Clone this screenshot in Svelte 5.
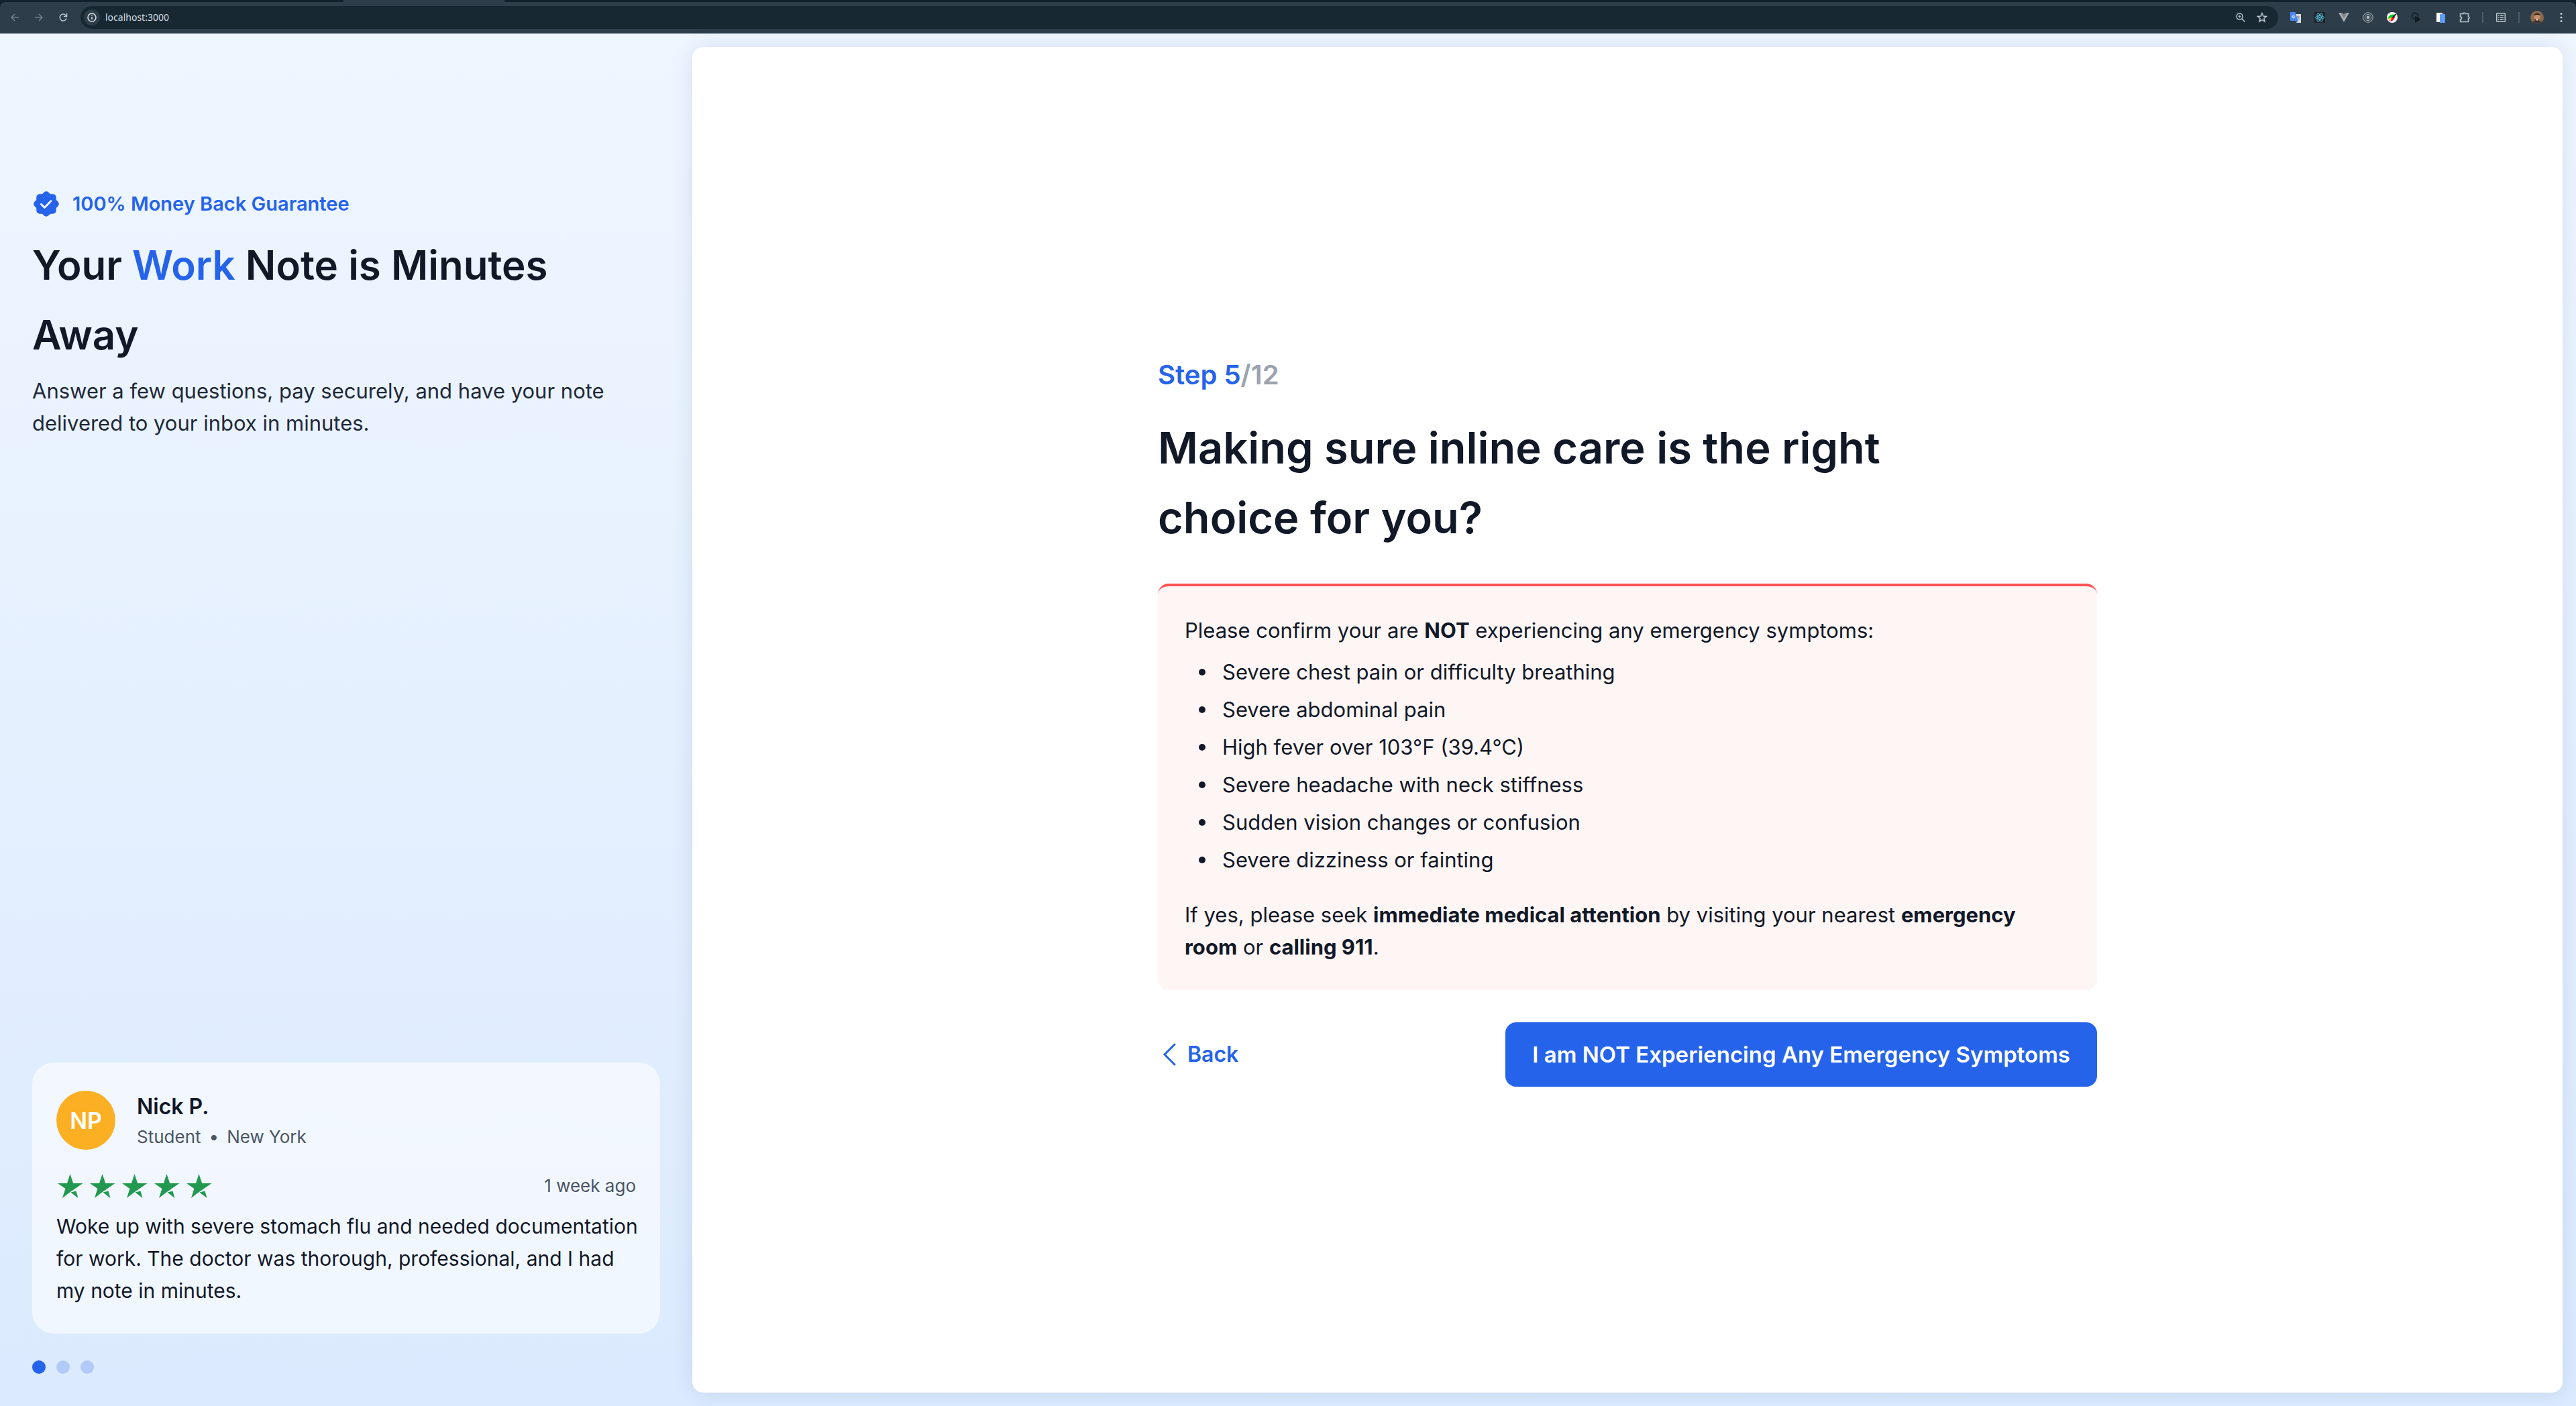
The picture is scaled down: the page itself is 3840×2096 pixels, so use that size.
<script>
  const stars = [1, 2, 3, 4, 5];
  const symptoms = [
    'Severe chest pain or difficulty breathing',
    'Severe abdominal pain',
    'High fever over 103°F (39.4°C)',
    'Severe headache with neck stiffness',
    'Sudden vision changes or confusion',
    'Severe dizziness or fainting'
  ];
  let slide = $state(0);
</script>

<div class="window">
  <header class="browser">
    <div class="tabstrip"><span class="tab"></span></div>
    <div class="toolbar">
      <nav class="nav">
        <button class="icon dim" aria-label="Back"><svg viewBox="0 0 16 16"><path d="M14 8H3M8 3L3 8l5 5" /></svg></button>
        <button class="icon dim" aria-label="Forward"><svg viewBox="0 0 16 16"><path d="M2 8h11M8 3l5 5-5 5" /></svg></button>
        <button class="icon" aria-label="Reload"><svg viewBox="0 0 16 16"><path d="M13 9.5A5 5 0 1 1 11.8 4.5L13 6M13.5 2v4.5H9" /></svg></button>
      </nav>
      <div class="address">
        <span class="info"><svg viewBox="0 0 16 16"><circle cx="8" cy="8" r="6" /><path d="M8 7v4M8 4.5v1.3" /></svg></span>
        <input class="url" aria-label="Address" value="localhost:3000" />
        <button class="icon" aria-label="Zoom"><svg viewBox="0 0 16 16"><circle cx="6.5" cy="6.5" r="4.5" /><path d="M10 10l4.500 4.500M6.500 4.800v3.400M4.800 6.500h3.400" /></svg></button>
        <button class="icon" aria-label="Bookmark"><svg viewBox="0 0 16 16"><path d="M8 1.800l1.800 4.300 4.700.4-3.600 3 1.100 4.600L8 11.700l-4 2.400 1.100-4.600-3.600-3 4.700-.4z" /></svg></button>
      </div>
      <div class="extensions">
        <button class="icon art" aria-label="Translate"><svg viewBox="0 0 16 16"><path d="M6 3h10v13H9z" fill="#d6dadd" /><path d="M9 7h5M11.500 6v1M13 7c-.5 2-2 3.500-3 4.500M10.500 8.500c1 1.500 2 2.500 3 3" fill="none" stroke="#6f7f8c" /><path d="M0 0h7.500l4 13H1a1 1 0 0 1-1-1z" fill="#4a86f0" /><path d="M7.500 13h4L9 16z" fill="#2a5fd0" /><path d="M6.300 5.200A2 2 0 1 0 7 7H5" stroke="#fff" /></svg></button>
        <button class="icon art" aria-label="React"><svg viewBox="0 0 16 16"><rect width="16" height="16" fill="#20232a" /><g stroke="#53c1de"><ellipse cx="8" cy="8" rx="6.5" ry="2.5" /><ellipse cx="8" cy="8" rx="6.5" ry="2.5" transform="rotate(60 8 8)" /><ellipse cx="8" cy="8" rx="6.5" ry="2.5" transform="rotate(120 8 8)" /></g><circle cx="8" cy="8" r="1.3" fill="#53c1de" /></svg></button>
        <button class="icon art" aria-label="Vue"><svg viewBox="0 0 16 16"><path d="M0 1h6l2 3 2-3h6L8 15z" fill="#a9adb0" /><path d="M3.200 1H6l2 3 2-3h2.800L8 9.500z" fill="#808488" /></svg></button>
        <button class="icon art" aria-label="Recorder"><svg viewBox="0 0 16 16"><g stroke="#b4b8bb"><circle cx="8" cy="8" r="7.3" /><circle cx="8" cy="8" r="4.6" /></g><circle cx="8" cy="8" r="2.4" fill="#b4b8bb" /></svg></button>
        <button class="icon art" aria-label="Colour picker"><svg viewBox="0 0 16 16"><circle cx="8" cy="8" r="8" fill="#fff" /><path d="M2 10C2 6 5 3.500 10 3.500l1 1.500-4.500 4z" fill="#00d21c" /><path d="M2 10l5-2-2 5z" fill="#ffe100" /><path d="M7 8l5-2c0 4-2.500 7-6.500 8z" fill="#f01432" /><path d="M3 11.500l2.500 1v2z" fill="#e01ee0" /><path d="M8 7.500l4-4.500h2l-1 2-4 4z" fill="#111" /></svg></button>
        <button class="icon art" aria-label="Player"><svg viewBox="0 0 16 16"><circle cx="6" cy="6" r="4.5" stroke="#1e2b34" stroke-width="3" /><path d="M6 6l9 5-9 5z" fill="#101a20" /></svg></button>
        <button class="icon art" aria-label="Documents"><svg viewBox="0 0 16 16"><rect x="2" y="1" width="9" height="14" rx="1" fill="#fff" /><rect x="7" y="3" width="8" height="13" rx="1" fill="#5d9df8" /></svg></button>
        <button class="icon" aria-label="Extensions"><svg viewBox="0 0 16 16"><path d="M1.500 2.500H6a1.500 1.500 0 0 1 3 0h4.500V7a1.500 1.500 0 0 1 0 3v4.500h-12V11a2 2 0 0 0 0-4z" /></svg></button>
        <span class="rule"></span>
        <button class="icon" aria-label="Side panel"><svg viewBox="0 0 16 16"><rect x="1.700" y="1.700" width="12.6" height="12.6" rx="1" /><path d="M4 5h1.500M7 5h5M4 8h1.500M7 8h5M4 11h1.500M7 11h5" /></svg></button>
        <span class="rule"></span>
        <button class="icon profile" aria-label="Profile"><svg viewBox="0 0 20 20"><circle cx="10" cy="10" r="10" fill="#8b6a4e" /><path d="M3 17c2-3 12-3 14 0a10 10 0 0 1-14 0z" fill="#3d3a35" /><ellipse cx="10" cy="10" rx="4.5" ry="6" fill="#c98f6b" /><path d="M5.500 7.500c0-5 9-5 9 0-2-2-7-2-9 0zM6 12.500c1 4.500 7 4.500 8 0-2 1-6 1-8 0z" fill="#2e201a" /><path d="M8.500 13.700h3" stroke="#fff" /></svg></button>
        <button class="icon" aria-label="Menu"><svg viewBox="0 0 16 16"><g fill="#bcc8cf" stroke="none"><circle cx="8" cy="2.5" r="1.6" /><circle cx="8" cy="8" r="1.6" /><circle cx="8" cy="13.5" r="1.6" /></g></svg></button>
      </div>
    </div>
  </header>

  <div class="page">
    <aside class="side">
      <section class="intro">
        <p class="guarantee">
          <svg viewBox="0 0 24 24" aria-hidden="true"><g fill="#2563eb"><rect x="3.600" y="3.600" width="16.800" height="16.800" rx="2.800" /><rect x="3.600" y="3.600" width="16.800" height="16.800" rx="2.800" transform="rotate(45 12 12)" /></g><path d="M7.700 12.300l2.800 2.800L16 9.500" fill="none" stroke="#fff" stroke-width="1.6" stroke-linecap="round" stroke-linejoin="round" /></svg>
          100% Money Back Guarantee
        </p>
        <h1>Your <em>Work</em> Note is Minutes Away</h1>
        <p class="lead">Answer a few questions, pay securely, and have your note delivered to your inbox in minutes.</p>
      </section>

      <section class="reviews">
        <article class="card">
          <div class="person">
            <span class="avatar">NP</span>
            <div class="who">
              <h3>Nick P.</h3>
              <p class="meta"><span>Student</span><span>•</span><span>New York</span></p>
            </div>
          </div>
          <div class="rating">
            <span class="stars" role="img" aria-label="5 out of 5 stars">
              {#each stars as s (s)}
                <svg viewBox="0 0 40 40"><path d="M20.500 2l4.700 14H39.500L20 29.500 9 38l4.500-14L2 16h14z M21.500 29.500l8-2L32.500 38z" /></svg>
              {/each}
            </span>
            <span class="when">1 week ago</span>
          </div>
          <p class="quote">Woke up with severe stomach flu and needed documentation for work. The doctor was thorough, professional, and I had my note in minutes.</p>
        </article>
        <div class="dots">
          {#each [0, 1, 2] as i (i)}
            <button class="dot" class:active={slide === i} aria-label={`Review ${i + 1}`} onclick={() => (slide = i)}></button>
          {/each}
        </div>
      </section>
    </aside>

    <main class="panel">
      <div class="content">
        <p class="step">Step 5<span>/12</span></p>
        <h2>Making sure inline care is the right choice for you?</h2>
        <section class="alert">
          <p>Please confirm your are <strong>NOT</strong> experiencing any emergency symptoms:</p>
          <ul>
            {#each symptoms as symptom (symptom)}
              <li>{symptom}</li>
            {/each}
          </ul>
          <p>If yes, please seek <strong>immediate medical attention</strong> by visiting your nearest <strong>emergency room</strong> or <strong>calling 911</strong>.</p>
        </section>
        <div class="actions">
          <button class="back"><svg viewBox="0 0 32 40" aria-hidden="true"><path d="M25 5L10 20l15 15" /></svg>Back</button>
          <button class="confirm">I am NOT Experiencing Any Emergency Symptoms</button>
        </div>
      </div>
    </main>
  </div>
</div>

<style>
  :global(body) { margin: 0; }
  * { box-sizing: border-box; }
  h1, h2, h3, p, ul { margin: 0; padding: 0; }
  button { border: 0; padding: 0; background: none; font: inherit; color: inherit; cursor: pointer; }

  .window {
    min-height: 100vh;
    display: flex;
    flex-direction: column;
    font-family: Inter, "Liberation Sans", sans-serif;
    color: #111827;
  }

  .browser { background: #10222b; }
  .tabstrip { height: 3px; padding-left: 512px; }
  .tab { display: block; width: 240px; height: 3px; background: #2d3e4a; }
  .toolbar {
    display: flex;
    align-items: center;
    height: 47px;
    padding: 0 12px;
    background: #2d3e4a;
    border-bottom: 1px solid #44535e;
    border-radius: 8px 8px 0 0;
  }
  .nav { display: flex; gap: 16px; padding-right: 16px; }
  .icon { display: flex; align-items: center; justify-content: center; width: 20px; height: 20px; }
  .icon svg { width: 16px; height: 16px; fill: none; stroke: #bcc8cf; stroke-width: 1.5; }
  .dim svg { stroke: #73818a; }
  .icon.art svg { stroke: none; stroke-width: 1; }
  .icon.profile svg { width: 20px; height: 20px; stroke: none; }
  .address {
    flex: 1;
    display: flex;
    align-items: center;
    gap: 12px;
    height: 34px;
    padding: 0 14px 0 5px;
    border-radius: 17px;
    background: #172833;
  }
  .info { display: flex; align-items: center; justify-content: center; width: 24px; height: 24px; border-radius: 50%; background: #2d3e4a; }
  .info svg { width: 16px; height: 16px; fill: none; stroke: #dce3e7; stroke-width: 1.5; }
  .url { flex: 1; min-width: 0; margin-left: -4px; padding: 0; border: 0; outline: 0; background: none; color: #d5dde2; font: 14px/20px "Noto Sans", sans-serif; }
  .extensions { display: flex; align-items: center; gap: 16px; padding-left: 16px; }
  .rule { width: 2px; height: 16px; background: #4b5d69; }

  .page {
    flex: 1;
    display: flex;
    padding: 20px 20px 20px 0;
    background: linear-gradient(#eff6ff, #dbeafe);
  }
  .side {
    flex: 0 0 1032px;
    display: flex;
    flex-direction: column;
    justify-content: space-between;
    padding: 213px 48px 28px;
  }
  .guarantee { display: flex; align-items: center; gap: 18px; font-size: 29px; line-height: 40px; font-weight: 600; color: #2563eb; }
  .guarantee svg { width: 42px; height: 42px; }
  h1 { margin-top: 18px; font-size: 60px; line-height: 104px; font-weight: 600; }
  h1 em { font-style: normal; color: #2563eb; }
  .lead { margin-top: 8px; font-size: 31px; line-height: 48px; color: #1f2937; }

  .card { padding: 40px 28px 40px 36px; border-radius: 32px; background: rgba(255, 255, 255, 0.6); }
  .person { display: flex; align-items: center; gap: 32px; }
  .who { padding-top: 2px; }
  .avatar { display: flex; align-items: center; justify-content: center; width: 88px; height: 88px; border-radius: 50%; background: #fbb024; color: #fff; font-size: 34px; font-weight: 600; }
  h3 { font-size: 32px; line-height: 48px; font-weight: 600; }
  .meta { display: flex; gap: 12px; font-size: 26px; line-height: 42px; color: #4b5563; }
  .rating { display: flex; align-items: center; justify-content: space-between; margin-top: 32px; padding-right: 8px; }
  .stars { display: flex; gap: 8px; }
  .stars svg { width: 40px; height: 40px; fill: #22994f; }
  .when { font-size: 26px; line-height: 40px; color: #4b5563; }
  .quote { margin-top: 16px; font-size: 30px; line-height: 48px; }
  .dots { display: flex; gap: 16px; margin-top: 40px; }
  .dot { width: 20px; height: 20px; border-radius: 50%; background: #b1caf9; }
  .dot.active { background: #2563eb; }

  .panel {
    flex: 1;
    min-width: 0;
    display: flex;
    align-items: center;
    justify-content: center;
    border-radius: 16px;
    background: #fff;
    box-shadow: 0 0 32px rgba(30, 64, 120, 0.12);
  }
  .content { width: 1400px; }
  .step { font-size: 40px; line-height: 64px; font-weight: 600; color: #2563eb; }
  .step span { color: #9ca3af; }
  h2 { margin-top: 25px; padding-right: 120px; font-size: 65px; line-height: 104px; font-weight: 600; }
  .alert {
    margin-top: 46px;
    padding: 42px 80px 40px 40px;
    border-top: 4px solid #ff5252;
    border-radius: 16px;
    background: #fef6f5;
    font-size: 31px;
    line-height: 48px;
  }
  .alert ul { margin: 10px 0 30px; list-style: none; }
  .alert li { display: flex; align-items: center; gap: 25px; padding-left: 21px; line-height: 56px; }
  .alert li::before { content: ""; width: 10px; height: 10px; border-radius: 50%; background: #111827; }
  strong { font-weight: 700; }
  .actions { display: flex; align-items: center; justify-content: space-between; margin-top: 48px; }
  .back { display: flex; align-items: center; gap: 12px; color: #2563eb; font-size: 32px; line-height: 48px; font-weight: 600; }
  .back svg { width: 32px; height: 40px; fill: none; stroke: #2563eb; stroke-width: 3; stroke-linecap: round; }
  .confirm { height: 96px; padding: 0 40px; border-radius: 16px; background: #2563eb; color: #fff; font-size: 33px; font-weight: 600; }
</style>
